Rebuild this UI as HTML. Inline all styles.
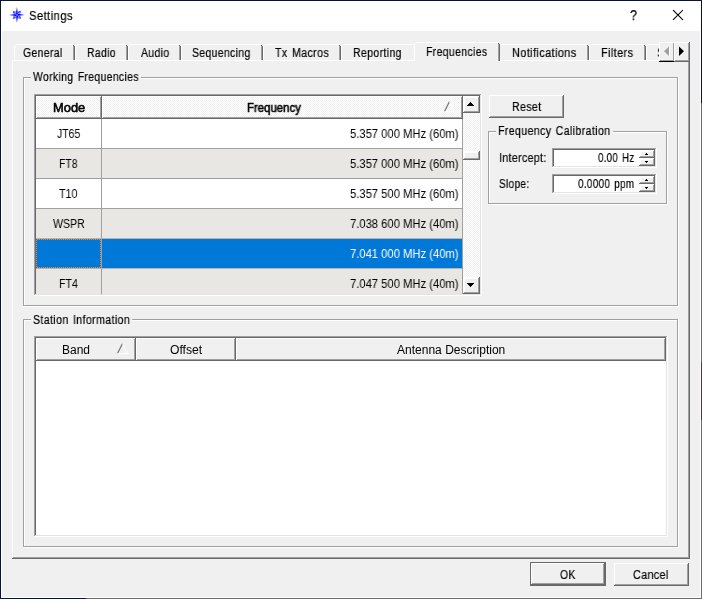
<!DOCTYPE html>
<html><head><meta charset="utf-8"><title>Settings</title>
<style>
html,body{margin:0;padding:0}
body{width:702px;height:599px;position:relative;overflow:hidden;background:#f0f0f0;font-family:"Liberation Sans",sans-serif}
body>div,body>span,body>svg{position:absolute;display:block}
.t{line-height:16px;white-space:pre;color:#000;transform-origin:0 0;will-change:transform}
</style></head><body>
<div style="left:0px;top:0px;width:702px;height:599px;background:#0a1236;"></div>
<div style="left:701px;top:0px;width:1px;height:103px;background:#0b0b50;"></div>
<div style="left:701px;top:103px;width:1px;height:496px;background:#6c6c6c;"></div>
<div style="left:701px;top:362px;width:1px;height:58px;background:#5a2a6a;"></div>
<div style="left:86px;top:598px;width:616px;height:1px;background:#686868;"></div>
<div style="left:1px;top:1px;width:700px;height:597px;background:#fff;"></div>
<div style="left:2px;top:31px;width:698px;height:566px;background:#f0f0f0;"></div>
<svg style="left:0px;top:0px" width="40" height="31" viewBox="0 0 40 31"><path d="M18.24 16.24 L20.34 16.24 L21.07 19.07 Z" fill="#1010ff"/><path d="M18.24 16.24 L18.24 18.34 L21.07 19.07 Z" fill="#4646ff"/><path d="M15.56 16.24 L15.56 18.34 L12.73 19.07 Z" fill="#1010ff"/><path d="M15.56 16.24 L13.46 16.24 L12.73 19.07 Z" fill="#4646ff"/><path d="M15.56 13.56 L13.46 13.56 L12.73 10.73 Z" fill="#1010ff"/><path d="M15.56 13.56 L15.56 11.46 L12.73 10.73 Z" fill="#4646ff"/><path d="M18.24 13.56 L18.24 11.46 L21.07 10.73 Z" fill="#1010ff"/><path d="M18.24 13.56 L20.34 13.56 L21.07 10.73 Z" fill="#4646ff"/><path d="M16.90 14.90 L18.10 13.70 L24.70 14.90 Z" fill="#0000ff"/><path d="M16.90 14.90 L18.10 16.10 L24.70 14.90 Z" fill="#3030ff"/><path d="M16.90 14.90 L18.10 16.10 L16.90 22.70 Z" fill="#0000ff"/><path d="M16.90 14.90 L15.70 16.10 L16.90 22.70 Z" fill="#3030ff"/><path d="M16.90 14.90 L15.70 16.10 L9.10 14.90 Z" fill="#0000ff"/><path d="M16.90 14.90 L15.70 13.70 L9.10 14.90 Z" fill="#3030ff"/><path d="M16.90 14.90 L15.70 13.70 L16.90 7.10 Z" fill="#0000ff"/><path d="M16.90 14.90 L18.10 13.70 L16.90 7.10 Z" fill="#3030ff"/></svg>
<span class="t" style="left:29.40px;top:7.74px;font-size:12.3px;letter-spacing:0.45px;word-spacing:1.2px;-webkit-text-stroke:0.2px #000;transform:scaleX(0.9148)">Settings</span>
<span class="t" style="left:630.00px;top:7.31px;font-size:14.4px;letter-spacing:0.45px;word-spacing:1.2px;-webkit-text-stroke:0.25px #000;transform:scaleX(0.8800)">?</span>
<svg style="left:672px;top:9px" width="13" height="13" viewBox="0 0 13 13"><path d="M1.4 1.4 L10.6 10.6 M10.6 1.4 L1.4 10.6" stroke="#000" stroke-width="1.05" stroke-linecap="square" fill="none"/></svg>
<div style="left:12px;top:60px;width:678px;height:1px;background:#fff;"></div>
<div style="left:12px;top:60px;width:1px;height:499px;background:#fff;"></div>
<div style="left:13px;top:557px;width:676px;height:1px;background:#a0a0a0;"></div>
<div style="left:688px;top:60px;width:1px;height:498px;background:#a0a0a0;"></div>
<div style="left:12px;top:558px;width:678px;height:1px;background:#696969;"></div>
<div style="left:689px;top:60px;width:1px;height:499px;background:#696969;"></div>
<div style="left:16px;top:44px;width:57px;height:1px;background:#fff;"></div>
<div style="left:14px;top:46px;width:1px;height:14px;background:#fff;"></div>
<div style="left:15px;top:45px;width:1px;height:1px;background:#fff;"></div>
<div style="left:73px;top:46px;width:1px;height:14px;background:#a0a0a0;"></div>
<div style="left:74px;top:46px;width:1px;height:14px;background:#696969;"></div>
<div style="left:73px;top:45px;width:1px;height:1px;background:#696969;"></div>
<span class="t" style="left:23.20px;top:44.67px;font-size:12.5px;letter-spacing:0.45px;word-spacing:1.2px;-webkit-text-stroke:0.2px #000;transform:scaleX(0.8305)">General</span>
<div style="left:77px;top:44px;width:49px;height:1px;background:#fff;"></div>
<div style="left:75px;top:46px;width:1px;height:14px;background:#fff;"></div>
<div style="left:76px;top:45px;width:1px;height:1px;background:#fff;"></div>
<div style="left:126px;top:46px;width:1px;height:14px;background:#a0a0a0;"></div>
<div style="left:127px;top:46px;width:1px;height:14px;background:#696969;"></div>
<div style="left:126px;top:45px;width:1px;height:1px;background:#696969;"></div>
<span class="t" style="left:87.20px;top:44.67px;font-size:12.5px;letter-spacing:0.45px;word-spacing:1.2px;-webkit-text-stroke:0.2px #000;transform:scaleX(0.8279)">Radio</span>
<div style="left:130px;top:44px;width:49px;height:1px;background:#fff;"></div>
<div style="left:128px;top:46px;width:1px;height:14px;background:#fff;"></div>
<div style="left:129px;top:45px;width:1px;height:1px;background:#fff;"></div>
<div style="left:179px;top:46px;width:1px;height:14px;background:#a0a0a0;"></div>
<div style="left:180px;top:46px;width:1px;height:14px;background:#696969;"></div>
<div style="left:179px;top:45px;width:1px;height:1px;background:#696969;"></div>
<span class="t" style="left:140.60px;top:44.67px;font-size:12.5px;letter-spacing:0.45px;word-spacing:1.2px;-webkit-text-stroke:0.2px #000;transform:scaleX(0.8343)">Audio</span>
<div style="left:183px;top:44px;width:78px;height:1px;background:#fff;"></div>
<div style="left:181px;top:46px;width:1px;height:14px;background:#fff;"></div>
<div style="left:182px;top:45px;width:1px;height:1px;background:#fff;"></div>
<div style="left:261px;top:46px;width:1px;height:14px;background:#a0a0a0;"></div>
<div style="left:262px;top:46px;width:1px;height:14px;background:#696969;"></div>
<div style="left:261px;top:45px;width:1px;height:1px;background:#696969;"></div>
<span class="t" style="left:192.20px;top:44.67px;font-size:12.5px;letter-spacing:0.45px;word-spacing:1.2px;-webkit-text-stroke:0.2px #000;transform:scaleX(0.8308)">Sequencing</span>
<div style="left:265px;top:44px;width:74px;height:1px;background:#fff;"></div>
<div style="left:263px;top:46px;width:1px;height:14px;background:#fff;"></div>
<div style="left:264px;top:45px;width:1px;height:1px;background:#fff;"></div>
<div style="left:339px;top:46px;width:1px;height:14px;background:#a0a0a0;"></div>
<div style="left:340px;top:46px;width:1px;height:14px;background:#696969;"></div>
<div style="left:339px;top:45px;width:1px;height:1px;background:#696969;"></div>
<span class="t" style="left:275.00px;top:44.67px;font-size:12.5px;letter-spacing:0.45px;word-spacing:1.2px;-webkit-text-stroke:0.2px #000;transform:scaleX(0.8500)">Tx Macros</span>
<div style="left:343px;top:44px;width:71px;height:1px;background:#fff;"></div>
<div style="left:341px;top:46px;width:1px;height:14px;background:#fff;"></div>
<div style="left:342px;top:45px;width:1px;height:1px;background:#fff;"></div>
<span class="t" style="left:353.20px;top:44.67px;font-size:12.5px;letter-spacing:0.45px;word-spacing:1.2px;-webkit-text-stroke:0.2px #000;transform:scaleX(0.8384)">Reporting</span>
<div style="left:500px;top:44px;width:87px;height:1px;background:#fff;"></div>
<div style="left:587px;top:46px;width:1px;height:14px;background:#a0a0a0;"></div>
<div style="left:588px;top:46px;width:1px;height:14px;background:#696969;"></div>
<div style="left:587px;top:45px;width:1px;height:1px;background:#696969;"></div>
<span class="t" style="left:512.40px;top:44.67px;font-size:12.5px;letter-spacing:0.45px;word-spacing:1.2px;-webkit-text-stroke:0.2px #000;transform:scaleX(0.8732)">Notifications</span>
<div style="left:591px;top:44px;width:53px;height:1px;background:#fff;"></div>
<div style="left:589px;top:46px;width:1px;height:14px;background:#fff;"></div>
<div style="left:590px;top:45px;width:1px;height:1px;background:#fff;"></div>
<div style="left:644px;top:46px;width:1px;height:14px;background:#a0a0a0;"></div>
<div style="left:645px;top:46px;width:1px;height:14px;background:#696969;"></div>
<div style="left:644px;top:45px;width:1px;height:1px;background:#696969;"></div>
<span class="t" style="left:601.40px;top:44.67px;font-size:12.5px;letter-spacing:0.45px;word-spacing:1.2px;-webkit-text-stroke:0.2px #000;transform:scaleX(0.8719)">Filters</span>
<div style="left:648px;top:44px;width:13px;height:1px;background:#fff;"></div>
<div style="left:646px;top:46px;width:1px;height:14px;background:#fff;"></div>
<div style="left:647px;top:45px;width:1px;height:1px;background:#fff;"></div>
<div style="left:646px;top:44px;width:13px;height:16px;overflow:hidden;background:transparent">
<span class="t" style="position:absolute;left:10.9px;top:0.67px;will-change:transform;font-size:12.5px;letter-spacing:0.45px;transform:scaleX(0.83)">Scheduler</span></div>
<div style="left:414px;top:42px;width:86px;height:19px;background:#f0f0f0;"></div>
<div style="left:416px;top:42px;width:82px;height:1px;background:#fff;"></div>
<div style="left:414px;top:44px;width:1px;height:17px;background:#fff;"></div>
<div style="left:415px;top:43px;width:1px;height:1px;background:#fff;"></div>
<div style="left:498px;top:44px;width:1px;height:17px;background:#a0a0a0;"></div>
<div style="left:499px;top:44px;width:1px;height:17px;background:#696969;"></div>
<div style="left:498px;top:43px;width:1px;height:1px;background:#696969;"></div>
<span class="t" style="left:426.40px;top:43.67px;font-size:12.5px;letter-spacing:0.45px;word-spacing:1.2px;-webkit-text-stroke:0.2px #000;transform:scaleX(0.8328)">Frequencies</span>
<div style="left:659px;top:42px;width:31px;height:20px;background:#f0f0f0;"></div>
<div style="left:659px;top:42px;width:30px;height:1px;background:#fff;"></div>
<div style="left:659px;top:42px;width:1px;height:19px;background:#fff;"></div>
<div style="left:674px;top:43px;width:1px;height:18px;background:#fff;"></div>
<div style="left:673px;top:43px;width:1px;height:18px;background:#a0a0a0;"></div>
<div style="left:660px;top:60px;width:14px;height:1px;background:#a0a0a0;"></div>
<div style="left:659px;top:61px;width:15px;height:1px;background:#000;"></div>
<div style="left:675px;top:60px;width:14px;height:1px;background:#a0a0a0;"></div>
<div style="left:674px;top:61px;width:16px;height:1px;background:#696969;"></div>
<div style="left:688px;top:43px;width:1px;height:18px;background:#a0a0a0;"></div>
<div style="left:689px;top:42px;width:1px;height:20px;background:#696969;"></div>
<svg style="left:659px;top:43px" width="31" height="18" viewBox="0 0 31 18"><path d="M11 4.5 L11 14 L6 9.25 Z" fill="#fff"/><path d="M10 3.5 L10 13 L5 8.25 Z" fill="#a0a0a0"/><path d="M20 3.5 L20 13 L25 8.25 Z" fill="#000"/></svg>
<div style="left:23px;top:77px;width:8px;height:1px;background:#a0a0a0;"></div>
<div style="left:141px;top:77px;width:537px;height:1px;background:#a0a0a0;"></div>
<div style="left:24px;top:78px;width:7px;height:1px;background:#fff;"></div>
<div style="left:141px;top:78px;width:536px;height:1px;background:#fff;"></div>
<div style="left:23px;top:77px;width:1px;height:229px;background:#a0a0a0;"></div>
<div style="left:24px;top:78px;width:1px;height:227px;background:#fff;"></div>
<div style="left:23px;top:305px;width:655px;height:1px;background:#a0a0a0;"></div>
<div style="left:23px;top:306px;width:656px;height:1px;background:#fff;"></div>
<div style="left:677px;top:77px;width:1px;height:229px;background:#a0a0a0;"></div>
<div style="left:678px;top:77px;width:1px;height:230px;background:#fff;"></div>
<span class="t" style="left:32.90px;top:68.67px;font-size:12.5px;letter-spacing:0.45px;word-spacing:1.2px;-webkit-text-stroke:0.2px #000;transform:scaleX(0.8296)">Working Frequencies</span>
<div style="left:34px;top:94px;width:448px;height:202px;background:#fff;"></div>
<div style="left:34px;top:94px;width:448px;height:1px;background:#a0a0a0;"></div>
<div style="left:34px;top:94px;width:1px;height:202px;background:#a0a0a0;"></div>
<div style="left:35px;top:95px;width:446px;height:1px;background:#696969;"></div>
<div style="left:35px;top:95px;width:1px;height:200px;background:#696969;"></div>
<div style="left:35px;top:294px;width:446px;height:1px;background:#e3e3e3;"></div>
<div style="left:480px;top:95px;width:1px;height:200px;background:#e3e3e3;"></div>
<div style="left:34px;top:295px;width:448px;height:1px;background:#fff;"></div>
<div style="left:481px;top:94px;width:1px;height:202px;background:#fff;"></div>
<div style="left:36px;top:96px;width:66px;height:23px;background:#f0f0f0;background-image:conic-gradient(#fff 25%,#f0f0f0 0 50%,#fff 0 75%,#f0f0f0 0);background-size:2px 2px;"></div>
<div style="left:36px;top:96px;width:66px;height:1px;background:#fff;"></div>
<div style="left:36px;top:96px;width:1px;height:23px;background:#fff;"></div>
<div style="left:37px;top:117px;width:65px;height:1px;background:#a0a0a0;"></div>
<div style="left:100px;top:97px;width:1px;height:21px;background:#a0a0a0;"></div>
<div style="left:36px;top:118px;width:66px;height:1px;background:#696969;"></div>
<div style="left:101px;top:96px;width:1px;height:23px;background:#696969;"></div>
<div style="left:102px;top:96px;width:361px;height:23px;background:#f0f0f0;background-image:conic-gradient(#fff 25%,#f0f0f0 0 50%,#fff 0 75%,#f0f0f0 0);background-size:2px 2px;"></div>
<div style="left:102px;top:96px;width:361px;height:1px;background:#fff;"></div>
<div style="left:102px;top:96px;width:1px;height:23px;background:#fff;"></div>
<div style="left:103px;top:117px;width:360px;height:1px;background:#a0a0a0;"></div>
<div style="left:461px;top:97px;width:1px;height:21px;background:#a0a0a0;"></div>
<div style="left:102px;top:118px;width:361px;height:1px;background:#696969;"></div>
<div style="left:462px;top:96px;width:1px;height:23px;background:#696969;"></div>
<span class="t" style="left:52.50px;top:99.84px;font-size:12px;-webkit-text-stroke:0.55px #000;transform:scaleX(1.0733)">Mode</span>
<span class="t" style="left:246.50px;top:99.84px;font-size:12px;-webkit-text-stroke:0.55px #000;transform:scaleX(0.9499)">Frequency</span>
<svg style="left:442px;top:99px" width="14" height="14" viewBox="0 0 14 14"><path d="M2.5 12.5 L7.5 2.5" stroke="#787878" stroke-width="1.2" fill="none"/><path d="M7.5 2.5 L12.5 12.5 L2.5 12.5" stroke="#fff" stroke-width="1" fill="none"/></svg>
<div style="left:36px;top:119px;width:427px;height:29px;background:#fff;"></div>
<div style="left:36px;top:148px;width:427px;height:1px;background:#a0a0a0;"></div>
<div style="left:101px;top:119px;width:1px;height:29px;background:#a0a0a0;"></div>
<span class="t" style="left:56.50px;top:125.84px;font-size:12px;transform:scaleX(0.8709)">JT65</span>
<span class="t" style="left:350.40px;top:125.84px;font-size:12px;transform:scaleX(0.9350)">5.357 000 MHz (60m)</span>
<div style="left:36px;top:149px;width:427px;height:29px;background:#e9e7e3;"></div>
<div style="left:36px;top:178px;width:427px;height:1px;background:#a0a0a0;"></div>
<div style="left:101px;top:149px;width:1px;height:29px;background:#a0a0a0;"></div>
<span class="t" style="left:59.00px;top:155.84px;font-size:12px;transform:scaleX(0.8661)">FT8</span>
<span class="t" style="left:350.40px;top:155.84px;font-size:12px;transform:scaleX(0.9350)">5.357 000 MHz (60m)</span>
<div style="left:36px;top:179px;width:427px;height:29px;background:#fff;"></div>
<div style="left:36px;top:208px;width:427px;height:1px;background:#a0a0a0;"></div>
<div style="left:101px;top:179px;width:1px;height:29px;background:#a0a0a0;"></div>
<span class="t" style="left:59.40px;top:185.84px;font-size:12px;transform:scaleX(0.8915)">T10</span>
<span class="t" style="left:350.40px;top:185.84px;font-size:12px;transform:scaleX(0.9350)">5.357 500 MHz (60m)</span>
<div style="left:36px;top:209px;width:427px;height:29px;background:#e9e7e3;"></div>
<div style="left:36px;top:238px;width:427px;height:1px;background:#a0a0a0;"></div>
<div style="left:101px;top:209px;width:1px;height:29px;background:#a0a0a0;"></div>
<span class="t" style="left:52.90px;top:215.84px;font-size:12px;transform:scaleX(0.8833)">WSPR</span>
<span class="t" style="left:350.40px;top:215.84px;font-size:12px;transform:scaleX(0.9350)">7.038 600 MHz (40m)</span>
<div style="left:36px;top:239px;width:427px;height:29px;background:#0078d7;"></div>
<div style="left:36px;top:268px;width:427px;height:1px;background:#a0a0a0;"></div>
<div style="left:101px;top:239px;width:1px;height:29px;background:#a0a0a0;"></div>
<span class="t" style="left:350.40px;top:245.84px;font-size:12px;color:#fff;transform:scaleX(0.9350)">7.041 000 MHz (40m)</span>
<div style="left:36px;top:269px;width:427px;height:25px;background:#e9e7e3;"></div>
<div style="left:101px;top:269px;width:1px;height:25px;background:#a0a0a0;"></div>
<span class="t" style="left:59.00px;top:275.84px;font-size:12px;transform:scaleX(0.8801)">FT4</span>
<span class="t" style="left:350.40px;top:275.84px;font-size:12px;transform:scaleX(0.9350)">7.047 500 MHz (40m)</span>
<div style="left:36px;top:238px;width:427px;height:1px;background:#b9b3ac;"></div>
<div style="left:36px;top:268px;width:427px;height:1px;background:#b9b3ac;"></div>
<div style="left:36px;top:239px;width:65px;height:1px;background:repeating-linear-gradient(90deg,transparent 0 1px,#ff8728 1px 2px)"></div>
<div style="left:36px;top:267px;width:65px;height:1px;background:repeating-linear-gradient(90deg,transparent 0 1px,#ff8728 1px 2px)"></div>
<div style="left:36px;top:239px;width:1px;height:29px;background:repeating-linear-gradient(180deg,transparent 0 1px,#ff8728 1px 2px)"></div>
<div style="left:100px;top:239px;width:1px;height:29px;background:repeating-linear-gradient(180deg,transparent 0 1px,#ff8728 1px 2px)"></div>
<div style="left:462px;top:119px;width:1px;height:175px;background:#a0a0a0;"></div>
<div style="left:463px;top:96px;width:17px;height:198px;background:#f0f0f0;background-image:conic-gradient(#fff 25%,#f0f0f0 0 50%,#fff 0 75%,#f0f0f0 0);background-size:2px 2px;"></div>
<div style="left:463px;top:96px;width:17px;height:17px;background:#f0f0f0;"></div>
<div style="left:463px;top:96px;width:17px;height:1px;background:#fff;"></div>
<div style="left:463px;top:96px;width:1px;height:17px;background:#fff;"></div>
<div style="left:464px;top:111px;width:15px;height:1px;background:#a0a0a0;"></div>
<div style="left:478px;top:97px;width:1px;height:15px;background:#a0a0a0;"></div>
<div style="left:463px;top:112px;width:17px;height:1px;background:#696969;"></div>
<div style="left:479px;top:96px;width:1px;height:17px;background:#696969;"></div>
<div style="left:464px;top:97px;width:14px;height:1px;background:#fff;"></div>
<div style="left:464px;top:97px;width:1px;height:14px;background:#fff;"></div>
<div style="left:463px;top:277px;width:17px;height:17px;background:#f0f0f0;"></div>
<div style="left:463px;top:277px;width:17px;height:1px;background:#fff;"></div>
<div style="left:463px;top:277px;width:1px;height:17px;background:#fff;"></div>
<div style="left:464px;top:292px;width:15px;height:1px;background:#a0a0a0;"></div>
<div style="left:478px;top:278px;width:1px;height:15px;background:#a0a0a0;"></div>
<div style="left:463px;top:293px;width:17px;height:1px;background:#696969;"></div>
<div style="left:479px;top:277px;width:1px;height:17px;background:#696969;"></div>
<div style="left:464px;top:278px;width:14px;height:1px;background:#fff;"></div>
<div style="left:464px;top:278px;width:1px;height:14px;background:#fff;"></div>
<div style="left:463px;top:151px;width:17px;height:9px;background:#f0f0f0;"></div>
<div style="left:463px;top:151px;width:17px;height:1px;background:#fff;"></div>
<div style="left:463px;top:151px;width:1px;height:9px;background:#fff;"></div>
<div style="left:464px;top:158px;width:15px;height:1px;background:#a0a0a0;"></div>
<div style="left:478px;top:152px;width:1px;height:7px;background:#a0a0a0;"></div>
<div style="left:463px;top:159px;width:17px;height:1px;background:#696969;"></div>
<div style="left:479px;top:151px;width:1px;height:9px;background:#696969;"></div>
<div style="left:464px;top:152px;width:14px;height:1px;background:#fff;"></div>
<div style="left:464px;top:152px;width:1px;height:6px;background:#fff;"></div>
<div style="left:470px;top:102px;width:1px;height:1px;background:#000;"></div>
<div style="left:469px;top:103px;width:3px;height:1px;background:#000;"></div>
<div style="left:468px;top:104px;width:5px;height:1px;background:#000;"></div>
<div style="left:467px;top:105px;width:7px;height:1px;background:#000;"></div>
<div style="left:467px;top:283px;width:7px;height:1px;background:#000;"></div>
<div style="left:468px;top:284px;width:5px;height:1px;background:#000;"></div>
<div style="left:469px;top:285px;width:3px;height:1px;background:#000;"></div>
<div style="left:470px;top:286px;width:1px;height:1px;background:#000;"></div>
<div style="left:489px;top:95px;width:75px;height:23px;background:#f0f0f0;"></div>
<div style="left:489px;top:95px;width:75px;height:1px;background:#fff;"></div>
<div style="left:489px;top:95px;width:1px;height:23px;background:#fff;"></div>
<div style="left:490px;top:116px;width:73px;height:1px;background:#a0a0a0;"></div>
<div style="left:562px;top:96px;width:1px;height:21px;background:#a0a0a0;"></div>
<div style="left:489px;top:117px;width:75px;height:1px;background:#696969;"></div>
<div style="left:563px;top:95px;width:1px;height:23px;background:#696969;"></div>
<span class="t" style="left:511.60px;top:98.67px;font-size:12.5px;letter-spacing:0.45px;word-spacing:1.2px;-webkit-text-stroke:0.2px #000;transform:scaleX(0.8453)">Reset</span>
<div style="left:488px;top:131px;width:8px;height:1px;background:#a0a0a0;"></div>
<div style="left:613px;top:131px;width:54px;height:1px;background:#a0a0a0;"></div>
<div style="left:489px;top:132px;width:7px;height:1px;background:#fff;"></div>
<div style="left:613px;top:132px;width:53px;height:1px;background:#fff;"></div>
<div style="left:488px;top:131px;width:1px;height:73px;background:#a0a0a0;"></div>
<div style="left:489px;top:132px;width:1px;height:71px;background:#fff;"></div>
<div style="left:488px;top:203px;width:179px;height:1px;background:#a0a0a0;"></div>
<div style="left:488px;top:204px;width:180px;height:1px;background:#fff;"></div>
<div style="left:666px;top:131px;width:1px;height:73px;background:#a0a0a0;"></div>
<div style="left:667px;top:131px;width:1px;height:74px;background:#fff;"></div>
<span class="t" style="left:498.00px;top:122.67px;font-size:12.5px;letter-spacing:0.45px;word-spacing:1.2px;-webkit-text-stroke:0.2px #000;transform:scaleX(0.8456)">Frequency Calibration</span>
<span class="t" style="left:498.50px;top:149.67px;font-size:12.5px;letter-spacing:0.45px;word-spacing:1.2px;-webkit-text-stroke:0.2px #000;transform:scaleX(0.8420)">Intercept:</span>
<span class="t" style="left:498.50px;top:175.67px;font-size:12.5px;letter-spacing:0.45px;word-spacing:1.2px;-webkit-text-stroke:0.2px #000;transform:scaleX(0.8000)">Slope:</span>
<div style="left:552px;top:148px;width:105px;height:20px;background:#fff;"></div>
<div style="left:552px;top:148px;width:105px;height:1px;background:#a0a0a0;"></div>
<div style="left:552px;top:148px;width:1px;height:20px;background:#a0a0a0;"></div>
<div style="left:553px;top:149px;width:103px;height:1px;background:#696969;"></div>
<div style="left:553px;top:149px;width:1px;height:18px;background:#696969;"></div>
<div style="left:553px;top:166px;width:103px;height:1px;background:#e3e3e3;"></div>
<div style="left:655px;top:149px;width:1px;height:18px;background:#e3e3e3;"></div>
<div style="left:552px;top:167px;width:105px;height:1px;background:#fff;"></div>
<div style="left:656px;top:148px;width:1px;height:20px;background:#fff;"></div>
<div style="left:639px;top:150px;width:16px;height:8px;background:#f0f0f0;"></div>
<div style="left:639px;top:150px;width:16px;height:1px;background:#fff;"></div>
<div style="left:639px;top:150px;width:1px;height:8px;background:#fff;"></div>
<div style="left:640px;top:156px;width:14px;height:1px;background:#a0a0a0;"></div>
<div style="left:653px;top:151px;width:1px;height:6px;background:#a0a0a0;"></div>
<div style="left:639px;top:157px;width:16px;height:1px;background:#696969;"></div>
<div style="left:654px;top:150px;width:1px;height:8px;background:#696969;"></div>
<div style="left:640px;top:151px;width:13px;height:1px;background:#fff;"></div>
<div style="left:640px;top:151px;width:1px;height:5px;background:#fff;"></div>
<div style="left:639px;top:158px;width:16px;height:8px;background:#f0f0f0;"></div>
<div style="left:639px;top:158px;width:16px;height:1px;background:#fff;"></div>
<div style="left:639px;top:158px;width:1px;height:8px;background:#fff;"></div>
<div style="left:640px;top:164px;width:14px;height:1px;background:#a0a0a0;"></div>
<div style="left:653px;top:159px;width:1px;height:6px;background:#a0a0a0;"></div>
<div style="left:639px;top:165px;width:16px;height:1px;background:#696969;"></div>
<div style="left:654px;top:158px;width:1px;height:8px;background:#696969;"></div>
<div style="left:640px;top:159px;width:13px;height:1px;background:#fff;"></div>
<div style="left:640px;top:159px;width:1px;height:5px;background:#fff;"></div>
<div style="left:646px;top:153px;width:1px;height:1px;background:#000;"></div>
<div style="left:645px;top:154px;width:3px;height:1px;background:#000;"></div>
<div style="left:645px;top:161px;width:3px;height:1px;background:#000;"></div>
<div style="left:646px;top:162px;width:1px;height:1px;background:#000;"></div>
<span class="t" style="left:598.20px;top:149.67px;font-size:12.5px;letter-spacing:0.45px;word-spacing:1.2px;-webkit-text-stroke:0.2px #000;transform:scaleX(0.7698)">0.00 Hz</span>
<div style="left:552px;top:174px;width:105px;height:20px;background:#fff;"></div>
<div style="left:552px;top:174px;width:105px;height:1px;background:#a0a0a0;"></div>
<div style="left:552px;top:174px;width:1px;height:20px;background:#a0a0a0;"></div>
<div style="left:553px;top:175px;width:103px;height:1px;background:#696969;"></div>
<div style="left:553px;top:175px;width:1px;height:18px;background:#696969;"></div>
<div style="left:553px;top:192px;width:103px;height:1px;background:#e3e3e3;"></div>
<div style="left:655px;top:175px;width:1px;height:18px;background:#e3e3e3;"></div>
<div style="left:552px;top:193px;width:105px;height:1px;background:#fff;"></div>
<div style="left:656px;top:174px;width:1px;height:20px;background:#fff;"></div>
<div style="left:639px;top:176px;width:16px;height:8px;background:#f0f0f0;"></div>
<div style="left:639px;top:176px;width:16px;height:1px;background:#fff;"></div>
<div style="left:639px;top:176px;width:1px;height:8px;background:#fff;"></div>
<div style="left:640px;top:182px;width:14px;height:1px;background:#a0a0a0;"></div>
<div style="left:653px;top:177px;width:1px;height:6px;background:#a0a0a0;"></div>
<div style="left:639px;top:183px;width:16px;height:1px;background:#696969;"></div>
<div style="left:654px;top:176px;width:1px;height:8px;background:#696969;"></div>
<div style="left:640px;top:177px;width:13px;height:1px;background:#fff;"></div>
<div style="left:640px;top:177px;width:1px;height:5px;background:#fff;"></div>
<div style="left:639px;top:184px;width:16px;height:8px;background:#f0f0f0;"></div>
<div style="left:639px;top:184px;width:16px;height:1px;background:#fff;"></div>
<div style="left:639px;top:184px;width:1px;height:8px;background:#fff;"></div>
<div style="left:640px;top:190px;width:14px;height:1px;background:#a0a0a0;"></div>
<div style="left:653px;top:185px;width:1px;height:6px;background:#a0a0a0;"></div>
<div style="left:639px;top:191px;width:16px;height:1px;background:#696969;"></div>
<div style="left:654px;top:184px;width:1px;height:8px;background:#696969;"></div>
<div style="left:640px;top:185px;width:13px;height:1px;background:#fff;"></div>
<div style="left:640px;top:185px;width:1px;height:5px;background:#fff;"></div>
<div style="left:646px;top:179px;width:1px;height:1px;background:#000;"></div>
<div style="left:645px;top:180px;width:3px;height:1px;background:#000;"></div>
<div style="left:645px;top:187px;width:3px;height:1px;background:#000;"></div>
<div style="left:646px;top:188px;width:1px;height:1px;background:#000;"></div>
<span class="t" style="left:578.30px;top:175.67px;font-size:12.5px;letter-spacing:0.45px;word-spacing:1.2px;-webkit-text-stroke:0.2px #000;transform:scaleX(0.7874)">0.0000 ppm</span>
<div style="left:23px;top:319px;width:8px;height:1px;background:#a0a0a0;"></div>
<div style="left:132px;top:319px;width:546px;height:1px;background:#a0a0a0;"></div>
<div style="left:24px;top:320px;width:7px;height:1px;background:#fff;"></div>
<div style="left:132px;top:320px;width:545px;height:1px;background:#fff;"></div>
<div style="left:23px;top:319px;width:1px;height:228px;background:#a0a0a0;"></div>
<div style="left:24px;top:320px;width:1px;height:226px;background:#fff;"></div>
<div style="left:23px;top:546px;width:655px;height:1px;background:#a0a0a0;"></div>
<div style="left:23px;top:547px;width:656px;height:1px;background:#fff;"></div>
<div style="left:677px;top:319px;width:1px;height:228px;background:#a0a0a0;"></div>
<div style="left:678px;top:319px;width:1px;height:229px;background:#fff;"></div>
<span class="t" style="left:32.70px;top:311.67px;font-size:12.5px;letter-spacing:0.45px;word-spacing:1.2px;-webkit-text-stroke:0.2px #000;transform:scaleX(0.8469)">Station Information</span>
<div style="left:34px;top:336px;width:634px;height:201px;background:#fff;"></div>
<div style="left:34px;top:336px;width:634px;height:1px;background:#a0a0a0;"></div>
<div style="left:34px;top:336px;width:1px;height:201px;background:#a0a0a0;"></div>
<div style="left:35px;top:337px;width:632px;height:1px;background:#696969;"></div>
<div style="left:35px;top:337px;width:1px;height:199px;background:#696969;"></div>
<div style="left:35px;top:535px;width:632px;height:1px;background:#e3e3e3;"></div>
<div style="left:666px;top:337px;width:1px;height:199px;background:#e3e3e3;"></div>
<div style="left:34px;top:536px;width:634px;height:1px;background:#fff;"></div>
<div style="left:667px;top:336px;width:1px;height:201px;background:#fff;"></div>
<div style="left:36px;top:338px;width:100px;height:23px;background:#f0f0f0;"></div>
<div style="left:36px;top:338px;width:100px;height:1px;background:#fff;"></div>
<div style="left:36px;top:338px;width:1px;height:23px;background:#fff;"></div>
<div style="left:37px;top:359px;width:99px;height:1px;background:#a0a0a0;"></div>
<div style="left:134px;top:339px;width:1px;height:21px;background:#a0a0a0;"></div>
<div style="left:36px;top:360px;width:100px;height:1px;background:#696969;"></div>
<div style="left:135px;top:338px;width:1px;height:23px;background:#696969;"></div>
<div style="left:136px;top:338px;width:100px;height:23px;background:#f0f0f0;"></div>
<div style="left:136px;top:338px;width:100px;height:1px;background:#fff;"></div>
<div style="left:136px;top:338px;width:1px;height:23px;background:#fff;"></div>
<div style="left:137px;top:359px;width:99px;height:1px;background:#a0a0a0;"></div>
<div style="left:234px;top:339px;width:1px;height:21px;background:#a0a0a0;"></div>
<div style="left:136px;top:360px;width:100px;height:1px;background:#696969;"></div>
<div style="left:235px;top:338px;width:1px;height:23px;background:#696969;"></div>
<div style="left:236px;top:338px;width:430px;height:23px;background:#f0f0f0;"></div>
<div style="left:236px;top:338px;width:430px;height:1px;background:#fff;"></div>
<div style="left:236px;top:338px;width:1px;height:23px;background:#fff;"></div>
<div style="left:237px;top:359px;width:429px;height:1px;background:#a0a0a0;"></div>
<div style="left:664px;top:339px;width:1px;height:21px;background:#a0a0a0;"></div>
<div style="left:236px;top:360px;width:430px;height:1px;background:#696969;"></div>
<div style="left:665px;top:338px;width:1px;height:23px;background:#696969;"></div>
<span class="t" style="left:62.30px;top:341.84px;font-size:12px;transform:scaleX(0.9900)">Band</span>
<span class="t" style="left:170.00px;top:341.84px;font-size:12px;transform:scaleX(1.0126)">Offset</span>
<span class="t" style="left:396.80px;top:341.84px;font-size:12px;transform:scaleX(1.0019)">Antenna Description</span>
<svg style="left:116px;top:342px" width="14" height="14" viewBox="0 0 14 14"><path d="M1.5 11.5 L6.5 1.5" stroke="#787878" stroke-width="1.2" fill="none"/><path d="M6.5 1.5 L11.5 11.5 L1.5 11.5" stroke="#fff" stroke-width="1" fill="none"/></svg>
<div style="left:530px;top:562px;width:76px;height:24px;background:#696969;"></div>
<div style="left:531px;top:563px;width:74px;height:22px;background:#f0f0f0;"></div>
<div style="left:531px;top:563px;width:74px;height:1px;background:#fff;"></div>
<div style="left:531px;top:563px;width:1px;height:22px;background:#fff;"></div>
<div style="left:532px;top:583px;width:72px;height:1px;background:#a0a0a0;"></div>
<div style="left:603px;top:564px;width:1px;height:20px;background:#a0a0a0;"></div>
<div style="left:531px;top:584px;width:74px;height:1px;background:#696969;"></div>
<div style="left:604px;top:563px;width:1px;height:22px;background:#696969;"></div>
<span class="t" style="left:560.40px;top:566.67px;font-size:12.5px;letter-spacing:0.45px;word-spacing:1.2px;-webkit-text-stroke:0.2px #000;transform:scaleX(0.8238)">OK</span>
<div style="left:614px;top:563px;width:75px;height:23px;background:#f0f0f0;"></div>
<div style="left:614px;top:563px;width:75px;height:1px;background:#fff;"></div>
<div style="left:614px;top:563px;width:1px;height:23px;background:#fff;"></div>
<div style="left:615px;top:584px;width:73px;height:1px;background:#a0a0a0;"></div>
<div style="left:687px;top:564px;width:1px;height:21px;background:#a0a0a0;"></div>
<div style="left:614px;top:585px;width:75px;height:1px;background:#696969;"></div>
<div style="left:688px;top:563px;width:1px;height:23px;background:#696969;"></div>
<span class="t" style="left:633.40px;top:566.67px;font-size:12.5px;letter-spacing:0.45px;word-spacing:1.2px;-webkit-text-stroke:0.2px #000;transform:scaleX(0.8559)">Cancel</span>
</body></html>
